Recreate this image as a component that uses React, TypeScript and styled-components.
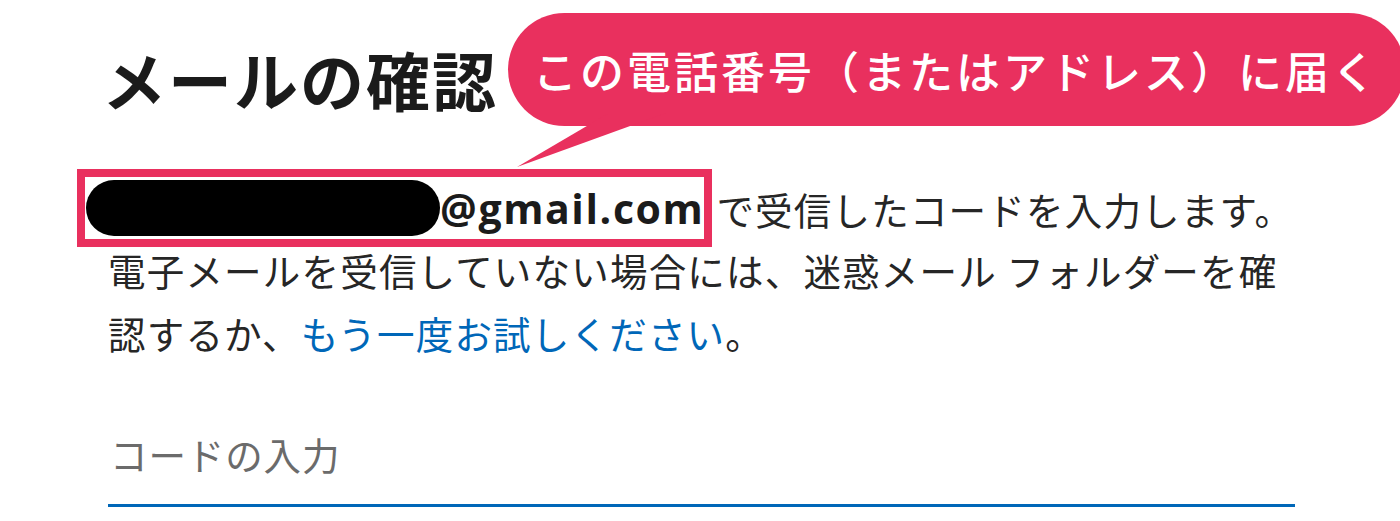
import React from 'react';
import styled, {createGlobalStyle} from 'styled-components';

const GlobalStyle = createGlobalStyle`
  html, body {
    margin: 0;
    padding: 0;
    background: #ffffff;
  }
  body {
    font-family: "Noto Sans CJK JP", "Noto Sans", sans-serif;
    color: #1b1b1b;
  }
`;

const StyledPage = styled.div`
  position: relative;
  width: 1400px;
  height: 521px;
  overflow: hidden;
  box-sizing: border-box;
  padding: 0 0 0 108px;
`;

const StyledContent = styled.div`
  width: 1187px;
`;

const StyledTitle = styled.h1`
  margin: 0 0 0 -6px;
  padding-top: 28px;
  font-size: 64px;
  line-height: 100px;
  font-weight: 700;
  letter-spacing: 2px;
  color: #1b1b1b;
`;

const StyledCallout = styled.div`
  position: absolute;
  left: 508px;
  top: 13px;
  height: 113px;
  box-sizing: border-box;
  padding: 0 26px 0 25px;
  display: flex;
  align-items: center;
  background: #e9305e;
  border-radius: 57px;
  color: #ffffff;
  font-size: 44px;
  font-weight: 500;
  letter-spacing: 3px;
  white-space: nowrap;
`;

const StyledTail = styled.svg`
  position: absolute;
  left: 0;
  top: 100px;
`;

const StyledBody = styled.div`
  margin-top: 41px;
  font-size: 37.5px;
  letter-spacing: 1.2px;
  color: #262626;
`;

const StyledEmailRow = styled.div`
  display: flex;
  align-items: center;
  margin-bottom: -9px;
  white-space: nowrap;
`;

const StyledHighlight = styled.div`
  display: flex;
  align-items: center;
  margin-left: -31px;
  margin-right: 4px;
  height: 78px;
  box-sizing: border-box;
  padding: 0 0 0 1px;
  border: 8px solid #e9305e;
`;

const StyledRedaction = styled.span`
  display: block;
  width: 354px;
  height: 56px;
  border-radius: 28px;
  background: #000000;
`;

const StyledDomain = styled.span`
  font-family: "Open Sans", "Noto Sans", sans-serif;
  font-weight: 700;
  font-size: 41px;
  letter-spacing: 1.6px;
  color: #1b1b1b;
`;

const StyledLine = styled.div`
  line-height: 63px;
  white-space: nowrap;
`;

const StyledLink = styled.a`
  color: #0067b8;
  text-decoration: none;
`;

const StyledCodeInput = styled.input`
  display: block;
  width: 1187px;
  margin-top: 63px;
  padding: 0 0 23px 2px;
  box-sizing: border-box;
  border: none;
  border-bottom: 3px solid #0067b8;
  outline: none;
  background: transparent;
  font-family: "Noto Sans CJK JP", sans-serif;
  font-size: 37.5px;
  letter-spacing: 0.9px;
  line-height: 54px;
  color: #1b1b1b;
  &::placeholder {
    color: #6b6b6b;
  }
`;

const App = () => {
  return (
    <StyledPage>
      <GlobalStyle />
      <StyledContent>
        <StyledTitle>メールの確認</StyledTitle>
        <StyledBody>
          <StyledEmailRow>
            <StyledHighlight>
              <StyledRedaction />
              <StyledDomain>@gmail.com</StyledDomain>
            </StyledHighlight>
            で受信したコードを入力します。
          </StyledEmailRow>
          <StyledLine>電子メールを受信していない場合には、迷惑メール フォルダーを確</StyledLine>
          <StyledLine>
            認するか、<StyledLink href="#">もう一度お試しください</StyledLink>。
          </StyledLine>
        </StyledBody>
        <StyledCodeInput type="text" placeholder="コードの入力" />
      </StyledContent>
      <StyledCallout>
        この電話番号（またはアドレス）に届く
        <StyledTail width="170" height="60" viewBox="0 0 170 60">
          <polygon points="101,0 158,0 9,54" fill="#e9305e" />
        </StyledTail>
      </StyledCallout>
    </StyledPage>
  );
};

export default App;
